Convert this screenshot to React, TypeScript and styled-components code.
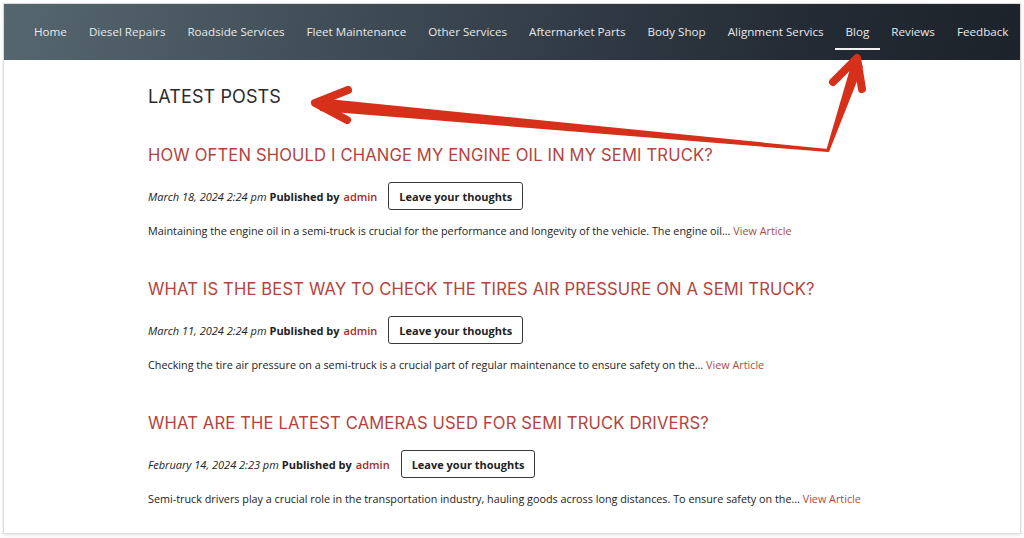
import { ReactElement } from "react";
import styled, { createGlobalStyle } from "styled-components";

const GlobalStyle = createGlobalStyle`
  html, body {
    margin: 0;
    padding: 0;
    background: #ffffff;
  }
  body {
    font-family: "Open Sans", "Liberation Sans", sans-serif;
  }
`;

const Page = styled.div`
  width: 1024px;
  height: 538px;
  padding: 3px 3px 4px 3px;
  box-sizing: border-box;
  position: relative;
  overflow: hidden;
`;

const Frame = styled.div`
  height: 100%;
  border: 1px solid #dcdcdc;
  box-shadow: 0 1px 3px rgba(0, 0, 0, 0.12);
  box-sizing: border-box;
  background: #ffffff;
  display: flex;
  flex-direction: column;
`;

const NavBar = styled.nav`
  height: 56px;
  flex-shrink: 0;
  display: flex;
  align-items: center;
  gap: 22px;
  padding-left: 30px;
  background: linear-gradient(100deg, #56666f 0%, #45535c 25%, #323c46 55%, #232a33 80%, #1d232b 100%);
  overflow: hidden;
`;

const NavItem = styled.a<{ $active?: boolean }>`
  position: relative;
  color: #e6e9eb;
  font-size: 11.65px;
  white-space: nowrap;
  text-decoration: none;
  line-height: 18px;

  &::after {
    content: "";
    display: ${(p) => (p.$active ? "block" : "none")};
    position: absolute;
    left: -11px;
    right: -11px;
    bottom: -9px;
    height: 2px;
    background: #f2f2f2;
  }
`;

const Content = styled.main`
  padding: 25px 0 0 144px;
  display: flex;
  flex-direction: column;
`;

const Heading = styled.h1`
  margin: 0 0 34px 0;
  font-family: Inter, "Noto Sans", sans-serif;
  font-weight: 400;
  font-size: 18px;
  line-height: 24px;
  color: #2b2b2b;
  letter-spacing: 0.1px;
`;

const Post = styled.article`
  display: flex;
  flex-direction: column;
  margin-bottom: 37px;
`;

const PostTitle = styled.h2`
  margin: 0 0 15px 0;
  font-family: Inter, "Noto Sans", sans-serif;
  font-weight: 400;
  font-size: 16.6px;
  line-height: 24px;
  color: #b4433d;
  letter-spacing: 0.15px;
`;

const Meta = styled.div`
  display: flex;
  align-items: center;
  font-size: 11px;
  color: #222;
  margin-bottom: 12px;
`;

const Date = styled.span`
  font-style: italic;
  margin-right: 3px;
`;

const By = styled.span`
  font-weight: 700;
`;

const Author = styled.span`
  font-weight: 600;
  color: #a62a24;
  margin-left: 4px;
`;

const ThoughtsButton = styled.button`
  margin-left: 11px;
  height: 28px;
  padding: 0 10px;
  border: 1.5px solid #3a3a3a;
  border-radius: 3px;
  background: #ffffff;
  font-family: "Open Sans", sans-serif;
  font-weight: 700;
  font-size: 11px;
  color: #222;
`;

const Excerpt = styled.p`
  margin: 0;
  font-size: 10.8px;
  line-height: 18px;
  color: #222;
`;

const ReadMore = styled.a`
  color: #b04a43;
  text-decoration: none;
`;

const Annotation = styled.svg`
  position: absolute;
  left: 0;
  top: 0;
  pointer-events: none;
`;

const navLinks = [
  "Home",
  "Diesel Repairs",
  "Roadside Services",
  "Fleet Maintenance",
  "Other Services",
  "Aftermarket Parts",
  "Body Shop",
  "Alignment Servics",
  "Blog",
  "Reviews",
  "Feedback",
];

type PostData = {
  title: string;
  date: string;
  excerpt: string;
};

const posts: PostData[] = [
  {
    title: "HOW OFTEN SHOULD I CHANGE MY ENGINE OIL IN MY SEMI TRUCK?",
    date: "March 18, 2024 2:24 pm",
    excerpt:
      "Maintaining the engine oil in a semi-truck is crucial for the performance and longevity of the vehicle. The engine oil…",
  },
  {
    title: "WHAT IS THE BEST WAY TO CHECK THE TIRES AIR PRESSURE ON A SEMI TRUCK?",
    date: "March 11, 2024 2:24 pm",
    excerpt:
      "Checking the tire air pressure on a semi-truck is a crucial part of regular maintenance to ensure safety on the…",
  },
  {
    title: "WHAT ARE THE LATEST CAMERAS USED FOR SEMI TRUCK DRIVERS?",
    date: "February 14, 2024 2:23 pm",
    excerpt:
      "Semi-truck drivers play a crucial role in the transportation industry, hauling goods across long distances. To ensure safety on the…",
  },
];

function PostItem({ post }: { post: PostData }): ReactElement {
  return (
    <Post>
      <PostTitle>{post.title}</PostTitle>
      <Meta>
        <Date>{post.date}</Date>
        <By>Published by</By>
        <Author>admin</Author>
        <ThoughtsButton>Leave your thoughts</ThoughtsButton>
      </Meta>
      <Excerpt>
        {post.excerpt} <ReadMore href="#">View Article</ReadMore>
      </Excerpt>
    </Post>
  );
}

function Arrows(): ReactElement {
  const red = "#d6301b";
  return (
    <Annotation width="1024" height="538" viewBox="0 0 1024 538">
      {/* arrow to the heading */}
      <polygon points="318,98 828,149 828,152 320,111" fill={red} />
      <polyline
        points="348,90 315,103 347,120"
        fill="none"
        stroke={red}
        strokeWidth="8"
        strokeLinecap="round"
        strokeLinejoin="round"
      />
      {/* arrow to the blog tab */}
      <polygon points="852,62 863,66 829,152 826,151" fill={red} />
      <polyline
        points="833,82 857,58 862,89"
        fill="none"
        stroke={red}
        strokeWidth="8"
        strokeLinecap="round"
        strokeLinejoin="round"
      />
    </Annotation>
  );
}

export default function App(): ReactElement {
  return (
    <>
      <GlobalStyle />
      <Page>
        <Frame>
          <NavBar>
            {navLinks.map((link) => (
              <NavItem key={link} href="#" $active={link === "Blog"}>
                {link}
              </NavItem>
            ))}
          </NavBar>
          <Content>
            <Heading>LATEST POSTS</Heading>
            {posts.map((post) => (
              <PostItem key={post.title} post={post} />
            ))}
          </Content>
        </Frame>
        <Arrows />
      </Page>
    </>
  );
}
